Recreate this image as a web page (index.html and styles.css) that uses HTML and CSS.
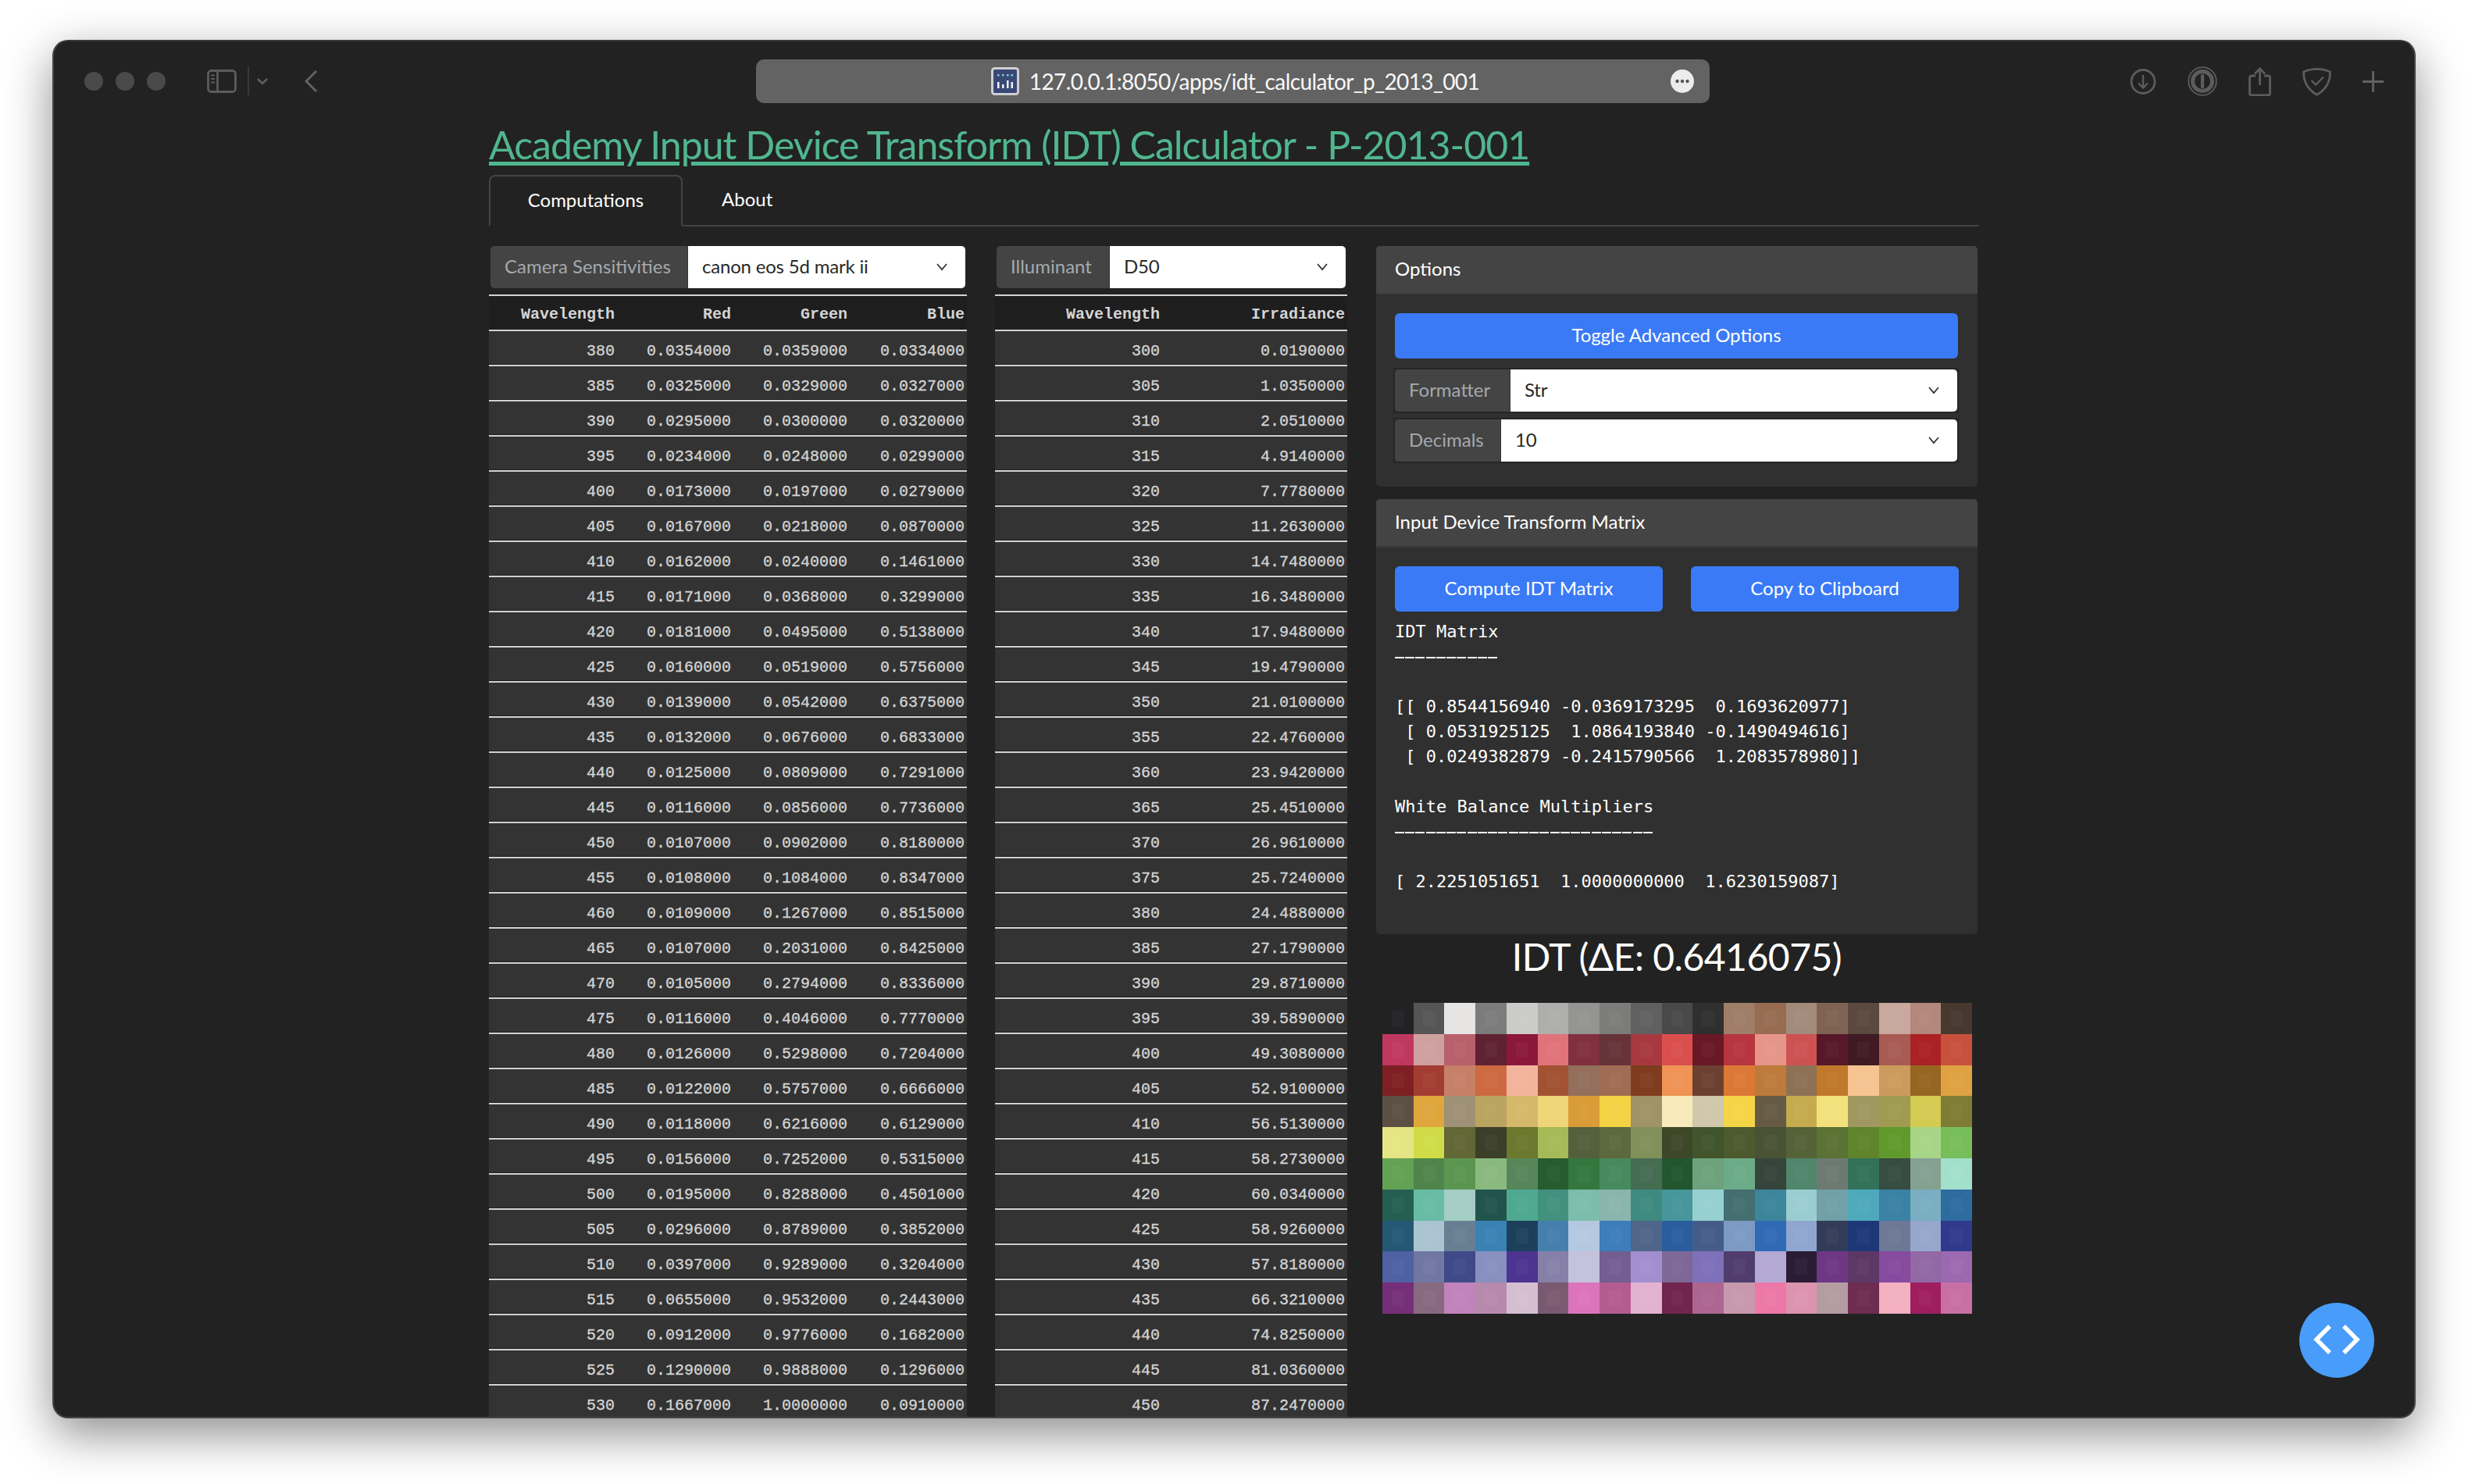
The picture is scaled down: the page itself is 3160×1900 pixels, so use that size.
FILE: index.html
```html
<!DOCTYPE html>
<html lang="en">
<head>
    <meta charset="UTF-8">
    <meta name="viewport" content="width=device-width, initial-scale=1.0">
    <title>Academy Input Device Transform (IDT) Calculator - P-2013-001</title>
    <link rel="stylesheet" href="styles.css">
</head>
<body>

<div class="window">
    <div class="toolbar">
        <div class="lights"><span></span><span></span><span></span></div>
        <svg class="tb-sidebar" width="38" height="30" viewBox="0 0 38 30" fill="none" stroke="#5c5c5c" stroke-width="2.800"><rect x="1.500" y="1.500" width="35" height="27" rx="4"/><path d="M13.500 1v28"/><path d="M5 7.500h5M5 12h5M5 16.500h5" stroke-width="2.200"/></svg>
        <span class="tb-sep"></span>
        <svg class="tb-chevron" width="14" height="8" viewBox="0 0 14 8" fill="none" stroke="#5e5e5e" stroke-width="2.600"><path d="M1 1l6 6 6-6"/></svg>
        <svg class="tb-back" width="16" height="28" viewBox="0 0 16 28" fill="none" stroke="#626262" stroke-width="3"><path d="M15 1L2 14l13 13"/></svg>
        <div class="urlbar">
            <svg class="favicon" width="36" height="36" viewBox="0 0 36 36"><rect x="1.500" y="1.500" width="33" height="33" rx="3" fill="#3a4876" stroke="#cfcfd2" stroke-width="3"/><path d="M8 9h2.500v2.500H8zM14 9h2.500v2.500H14zM20 9h2.500v2.500H20zM25.500 9H28v2.500h-2.500z" fill="#7fd0c8"/><path d="M8 19h2.500v8H8zM14 22h2.500v5H14zM20 17h2.500v10H20zM25.500 19H28v8h-2.500z" fill="#f0f4f8"/></svg>
            <span class="url-text">127.0.0.1:8050/apps/idt_calculator_p_2013_001</span>
            <svg class="url-more" width="30" height="30" viewBox="0 0 30 30"><circle cx="15" cy="15" r="15" fill="#ececec"/><circle cx="8.500" cy="15" r="2.200" fill="#555"/><circle cx="15" cy="15" r="2.200" fill="#555"/><circle cx="21.500" cy="15" r="2.200" fill="#555"/></svg>
        </div>
        <div class="tb-right">
            <svg width="34" height="33" viewBox="0 0 34 33" fill="none" stroke="#5c5c5c" stroke-width="2.800"><circle cx="17" cy="16.500" r="15"/><path d="M17 8v16M11 18.500l6 6 6-6" stroke-width="2.400"/></svg>
            <svg width="38" height="38" viewBox="0 0 38 38" fill="none" stroke="#5c5c5c"><circle cx="19" cy="19" r="17.800" stroke-width="1.800"/><circle cx="19" cy="19" r="12.500" stroke-width="5"/><path d="M19 12v14" stroke-width="4.400" stroke-linecap="round"/></svg>
            <svg width="29" height="37" viewBox="0 0 29 37" fill="none" stroke="#5c5c5c" stroke-width="2.800"><path d="M9 11H4a2.500 2.500 0 0 0-2.500 2.500v20A2.500 2.500 0 0 0 4 36h21a2.500 2.500 0 0 0 2.500-2.500v-20A2.500 2.500 0 0 0 25 11h-5"/><path d="M14.500 23V2M8 8.500l6.500-6.500 6.500 6.500"/></svg>
            <svg width="37" height="37" viewBox="0 0 37 37" fill="none" stroke="#5c5c5c" stroke-width="2.800"><path d="M1.700 6C12 1.200 25 1.200 35.300 6 36 18 30 29 18.500 35.300 7 29 1 18 1.700 6z"/><path d="M11.500 17l5.500 5.500 10-10" stroke-width="2.400"/></svg>
            <svg width="27" height="27" viewBox="0 0 27 27" fill="none" stroke="#626262" stroke-width="2.800"><path d="M13.500 0v27M0 13.500h27"/></svg>
        </div>
    </div>

    <div class="content">
        <h1 class="title"><a href="#">Academy Input Device Transform (IDT) Calculator - P-2013-001</a></h1>
        <div class="tabs">
            <div class="tab tab-active">Computations</div>
            <div class="tab">About</div>
        </div>

        <div class="columns">
            <div class="col-sens">
                <div class="input-group">
                    <span class="group-label label-sens">Camera Sensitivities</span>
                    <div class="group-select">canon eos 5d mark ii<svg width="16" height="10" viewBox="0 0 16 10" fill="none" stroke="#333" stroke-width="1.800"><path d="M2 1l6 7 6-7"/></svg></div>
                </div>
                <table class="data">
                    <thead><tr><th class="w-164">Wavelength</th><th class="w-149">Red</th><th class="w-149">Green</th><th class="w-150">Blue</th></tr></thead>
                    <tbody>
                        <tr><td>380</td><td>0.0354000</td><td>0.0359000</td><td>0.0334000</td></tr>
                        <tr><td>385</td><td>0.0325000</td><td>0.0329000</td><td>0.0327000</td></tr>
                        <tr><td>390</td><td>0.0295000</td><td>0.0300000</td><td>0.0320000</td></tr>
                        <tr><td>395</td><td>0.0234000</td><td>0.0248000</td><td>0.0299000</td></tr>
                        <tr><td>400</td><td>0.0173000</td><td>0.0197000</td><td>0.0279000</td></tr>
                        <tr><td>405</td><td>0.0167000</td><td>0.0218000</td><td>0.0870000</td></tr>
                        <tr><td>410</td><td>0.0162000</td><td>0.0240000</td><td>0.1461000</td></tr>
                        <tr><td>415</td><td>0.0171000</td><td>0.0368000</td><td>0.3299000</td></tr>
                        <tr><td>420</td><td>0.0181000</td><td>0.0495000</td><td>0.5138000</td></tr>
                        <tr><td>425</td><td>0.0160000</td><td>0.0519000</td><td>0.5756000</td></tr>
                        <tr><td>430</td><td>0.0139000</td><td>0.0542000</td><td>0.6375000</td></tr>
                        <tr><td>435</td><td>0.0132000</td><td>0.0676000</td><td>0.6833000</td></tr>
                        <tr><td>440</td><td>0.0125000</td><td>0.0809000</td><td>0.7291000</td></tr>
                        <tr><td>445</td><td>0.0116000</td><td>0.0856000</td><td>0.7736000</td></tr>
                        <tr><td>450</td><td>0.0107000</td><td>0.0902000</td><td>0.8180000</td></tr>
                        <tr><td>455</td><td>0.0108000</td><td>0.1084000</td><td>0.8347000</td></tr>
                        <tr><td>460</td><td>0.0109000</td><td>0.1267000</td><td>0.8515000</td></tr>
                        <tr><td>465</td><td>0.0107000</td><td>0.2031000</td><td>0.8425000</td></tr>
                        <tr><td>470</td><td>0.0105000</td><td>0.2794000</td><td>0.8336000</td></tr>
                        <tr><td>475</td><td>0.0116000</td><td>0.4046000</td><td>0.7770000</td></tr>
                        <tr><td>480</td><td>0.0126000</td><td>0.5298000</td><td>0.7204000</td></tr>
                        <tr><td>485</td><td>0.0122000</td><td>0.5757000</td><td>0.6666000</td></tr>
                        <tr><td>490</td><td>0.0118000</td><td>0.6216000</td><td>0.6129000</td></tr>
                        <tr><td>495</td><td>0.0156000</td><td>0.7252000</td><td>0.5315000</td></tr>
                        <tr><td>500</td><td>0.0195000</td><td>0.8288000</td><td>0.4501000</td></tr>
                        <tr><td>505</td><td>0.0296000</td><td>0.8789000</td><td>0.3852000</td></tr>
                        <tr><td>510</td><td>0.0397000</td><td>0.9289000</td><td>0.3204000</td></tr>
                        <tr><td>515</td><td>0.0655000</td><td>0.9532000</td><td>0.2443000</td></tr>
                        <tr><td>520</td><td>0.0912000</td><td>0.9776000</td><td>0.1682000</td></tr>
                        <tr><td>525</td><td>0.1290000</td><td>0.9888000</td><td>0.1296000</td></tr>
                        <tr><td>530</td><td>0.1667000</td><td>1.0000000</td><td>0.0910000</td></tr>
                    </tbody>
                </table>
            </div>

            <div class="col-illum">
                <div class="input-group">
                    <span class="group-label label-illum">Illuminant</span>
                    <div class="group-select">D50<svg width="16" height="10" viewBox="0 0 16 10" fill="none" stroke="#333" stroke-width="1.800"><path d="M2 1l6 7 6-7"/></svg></div>
                </div>
                <table class="data">
                    <thead><tr><th class="w-214">Wavelength</th><th class="w-237">Irradiance</th></tr></thead>
                    <tbody>
                        <tr><td>300</td><td>0.0190000</td></tr>
                        <tr><td>305</td><td>1.0350000</td></tr>
                        <tr><td>310</td><td>2.0510000</td></tr>
                        <tr><td>315</td><td>4.9140000</td></tr>
                        <tr><td>320</td><td>7.7780000</td></tr>
                        <tr><td>325</td><td>11.2630000</td></tr>
                        <tr><td>330</td><td>14.7480000</td></tr>
                        <tr><td>335</td><td>16.3480000</td></tr>
                        <tr><td>340</td><td>17.9480000</td></tr>
                        <tr><td>345</td><td>19.4790000</td></tr>
                        <tr><td>350</td><td>21.0100000</td></tr>
                        <tr><td>355</td><td>22.4760000</td></tr>
                        <tr><td>360</td><td>23.9420000</td></tr>
                        <tr><td>365</td><td>25.4510000</td></tr>
                        <tr><td>370</td><td>26.9610000</td></tr>
                        <tr><td>375</td><td>25.7240000</td></tr>
                        <tr><td>380</td><td>24.4880000</td></tr>
                        <tr><td>385</td><td>27.1790000</td></tr>
                        <tr><td>390</td><td>29.8710000</td></tr>
                        <tr><td>395</td><td>39.5890000</td></tr>
                        <tr><td>400</td><td>49.3080000</td></tr>
                        <tr><td>405</td><td>52.9100000</td></tr>
                        <tr><td>410</td><td>56.5130000</td></tr>
                        <tr><td>415</td><td>58.2730000</td></tr>
                        <tr><td>420</td><td>60.0340000</td></tr>
                        <tr><td>425</td><td>58.9260000</td></tr>
                        <tr><td>430</td><td>57.8180000</td></tr>
                        <tr><td>435</td><td>66.3210000</td></tr>
                        <tr><td>440</td><td>74.8250000</td></tr>
                        <tr><td>445</td><td>81.0360000</td></tr>
                        <tr><td>450</td><td>87.2470000</td></tr>
                    </tbody>
                </table>
            </div>

            <div class="col-side">
                <div class="card card-options">
                    <div class="card-header">Options</div>
                    <div class="card-body">
                        <button class="btn btn-full">Toggle Advanced Options</button>
                        <div class="input-group group-option">
                            <span class="group-label label-formatter">Formatter</span>
                            <div class="group-select">Str<svg width="16" height="10" viewBox="0 0 16 10" fill="none" stroke="#333" stroke-width="1.800"><path d="M2 1l6 7 6-7"/></svg></div>
                        </div>
                        <div class="input-group group-option">
                            <span class="group-label label-decimals">Decimals</span>
                            <div class="group-select">10<svg width="16" height="10" viewBox="0 0 16 10" fill="none" stroke="#333" stroke-width="1.800"><path d="M2 1l6 7 6-7"/></svg></div>
                        </div>
                    </div>
                </div>

                <div class="card card-matrix">
                    <div class="card-header">Input Device Transform Matrix</div>
                    <div class="card-body">
                        <div class="btn-row">
                            <button class="btn">Compute IDT Matrix</button>
                            <button class="btn">Copy to Clipboard</button>
                        </div>
<pre class="matrix">IDT Matrix
<span class="rule">----------</span>

[[ 0.8544156940 -0.0369173295  0.1693620977]
 [ 0.0531925125  1.0864193840 -0.1490494616]
 [ 0.0249382879 -0.2415790566  1.2083578980]]

White Balance Multipliers
<span class="rule">-------------------------</span>

[ 2.2251051651  1.0000000000  1.6230159087]</pre>
                    </div>
                </div>

                <h3 class="chart-title">IDT (ΔE: 0.6416075)</h3>
                <div class="chart">
                    <i style="background:#222224"></i><i style="background:#555555"></i><i style="background:#e6e5e3"></i><i style="background:#7b7c7b"></i><i style="background:#cbccc9"></i><i style="background:#aeaeac"></i><i style="background:#949493"></i><i style="background:#7c7c7b"></i><i style="background:#5f605f"></i><i style="background:#484948"></i><i style="background:#2e2f2e"></i><i style="background:#9f7d66"></i><i style="background:#976c51"></i><i style="background:#a38b7c"></i><i style="background:#7f6352"></i><i style="background:#5b483e"></i><i style="background:#c9a89d"></i><i style="background:#b3877c"></i><i style="background:#473830"></i>
                    <i style="background:#c03860"></i><i style="background:#cfa0a0"></i><i style="background:#b8606c"></i><i style="background:#5e2233"></i><i style="background:#8b173c"></i><i style="background:#e0737a"></i><i style="background:#80303f"></i><i style="background:#663339"></i><i style="background:#a8383f"></i><i style="background:#da4f4e"></i><i style="background:#691826"></i><i style="background:#b6353f"></i><i style="background:#e69589"></i><i style="background:#cc5352"></i><i style="background:#571829"></i><i style="background:#3f1a24"></i><i style="background:#a85b53"></i><i style="background:#aa2224"></i><i style="background:#c8513d"></i>
                    <i style="background:#7e2023"></i><i style="background:#a33d33"></i><i style="background:#c77f68"></i><i style="background:#cd6a42"></i><i style="background:#f2b49c"></i><i style="background:#a25232"></i><i style="background:#936f5c"></i><i style="background:#a06c53"></i><i style="background:#7f3c1e"></i><i style="background:#f09355"></i><i style="background:#6c4030"></i><i style="background:#dc7836"></i><i style="background:#bd7b3b"></i><i style="background:#8d7155"></i><i style="background:#c0782a"></i><i style="background:#f5c490"></i><i style="background:#cc9a5c"></i><i style="background:#956521"></i><i style="background:#dea242"></i>
                    <i style="background:#5c5045"></i><i style="background:#dfa63c"></i><i style="background:#9f9175"></i><i style="background:#bba460"></i><i style="background:#d5b86a"></i><i style="background:#eed577"></i><i style="background:#d99c36"></i><i style="background:#f3d244"></i><i style="background:#a09367"></i><i style="background:#f8eabb"></i><i style="background:#d0c7ac"></i><i style="background:#f5d548"></i><i style="background:#665a45"></i><i style="background:#c4ac4e"></i><i style="background:#f3e27c"></i><i style="background:#9f9860"></i><i style="background:#a09b50"></i><i style="background:#d3cb52"></i><i style="background:#7f7c36"></i>
                    <i style="background:#e5e683"></i><i style="background:#cfdc47"></i><i style="background:#636635"></i><i style="background:#3b3e28"></i><i style="background:#6b782d"></i><i style="background:#a6ba57"></i><i style="background:#545f3c"></i><i style="background:#5c693c"></i><i style="background:#82915a"></i><i style="background:#3e4829"></i><i style="background:#41552c"></i><i style="background:#4c5a2e"></i><i style="background:#495234"></i><i style="background:#546238"></i><i style="background:#5a7234"></i><i style="background:#5f842c"></i><i style="background:#609a2c"></i><i style="background:#a6d588"></i><i style="background:#77bd5a"></i>
                    <i style="background:#63a255"></i><i style="background:#4f854b"></i><i style="background:#5b9650"></i><i style="background:#8ab97f"></i><i style="background:#57865a"></i><i style="background:#265c30"></i><i style="background:#34783f"></i><i style="background:#478a5e"></i><i style="background:#456d52"></i><i style="background:#22562f"></i><i style="background:#6da27c"></i><i style="background:#6cab88"></i><i style="background:#36443c"></i><i style="background:#4f866c"></i><i style="background:#6d7a72"></i><i style="background:#33725a"></i><i style="background:#374c42"></i><i style="background:#85a192"></i><i style="background:#a3e0cb"></i>
                    <i style="background:#265e52"></i><i style="background:#68bca4"></i><i style="background:#a4cdc5"></i><i style="background:#22544e"></i><i style="background:#4fa990"></i><i style="background:#42917f"></i><i style="background:#7cbdab"></i><i style="background:#8ab5ae"></i><i style="background:#3e8a80"></i><i style="background:#46969b"></i><i style="background:#96d0d0"></i><i style="background:#456e70"></i><i style="background:#3c859a"></i><i style="background:#9acdd2"></i><i style="background:#71a0a8"></i><i style="background:#4ea9bc"></i><i style="background:#3a82a6"></i><i style="background:#7aaec2"></i><i style="background:#2e6b9e"></i>
                    <i style="background:#245873"></i><i style="background:#abc4d2"></i><i style="background:#687f93"></i><i style="background:#3a82b4"></i><i style="background:#1c405c"></i><i style="background:#447fae"></i><i style="background:#b4c9e0"></i><i style="background:#3c7dba"></i><i style="background:#50658a"></i><i style="background:#2a5d9e"></i><i style="background:#465c88"></i><i style="background:#7c9ac4"></i><i style="background:#316ab4"></i><i style="background:#8fa7d0"></i><i style="background:#323c58"></i><i style="background:#1e3877"></i><i style="background:#6c7896"></i><i style="background:#96a6cc"></i><i style="background:#2f3a8c"></i>
                    <i style="background:#4f60a3"></i><i style="background:#7077a2"></i><i style="background:#414a88"></i><i style="background:#8890c0"></i><i style="background:#4c3490"></i><i style="background:#8680a8"></i><i style="background:#c4c2dc"></i><i style="background:#735e92"></i><i style="background:#a38fd0"></i><i style="background:#7d6896"></i><i style="background:#7e70ba"></i><i style="background:#503d6e"></i><i style="background:#b4a8d4"></i><i style="background:#2a1c34"></i><i style="background:#6f3686"></i><i style="background:#5c3866"></i><i style="background:#864a9e"></i><i style="background:#9269a4"></i><i style="background:#9b69b0"></i>
                    <i style="background:#742f78"></i><i style="background:#886a80"></i><i style="background:#c183bc"></i><i style="background:#b68aac"></i><i style="background:#d4bfd0"></i><i style="background:#7a5a70"></i><i style="background:#dc74bc"></i><i style="background:#b45c90"></i><i style="background:#e2b2d0"></i><i style="background:#70244e"></i><i style="background:#ac6690"></i><i style="background:#c898ae"></i><i style="background:#ec78a8"></i><i style="background:#dc94ae"></i><i style="background:#b39ca2"></i><i style="background:#6e2c50"></i><i style="background:#f2b0c0"></i><i style="background:#9e1e60"></i><i style="background:#c870a4"></i>
                </div>
            </div>
        </div>
    </div>

    <div class="fab">
        <svg width="96" height="96" viewBox="0 0 96 96" fill="none" stroke="#fff" stroke-width="5.500"><path d="M39 30L22 47l17 17M57 30l17 17-17 17"/></svg>
    </div>
</div>

</body>
</html>
```

FILE: styles.css
```css
html, body {
    height: 100%;
    overflow: hidden;
}
body {
    margin: 0;
    background-color: #ffffff;
    font-family: Lato, "Liberation Sans", sans-serif;
}
.window {
    position: absolute;
    left: 67px;
    top: 51px;
    width: 3026px;
    height: 1765px;
    box-sizing: border-box;
    border: 2px solid #464646;
    border-top-color: #3a3a3a;
    border-radius: 20px;
    background-color: #222222;
    box-shadow: 0 20px 60px rgba(0, 0, 0, 0.45);
    overflow: hidden;
}

/* browser toolbar */
.toolbar {
    display: flex;
    align-items: center;
    height: 102px;
    padding-left: 39px;
}
.lights {
    display: flex;
    gap: 16px;
}
.lights span {
    width: 24px;
    height: 24px;
    border-radius: 50%;
    background-color: #4a4a4a;
}
.tb-sidebar {
    margin-left: 53px;
}
.tb-sep {
    width: 2px;
    height: 36px;
    margin-left: 14px;
    background-color: #3a3a3a;
}
.tb-chevron {
    margin-left: 10px;
}
.tb-back {
    margin-left: 47px;
}
.urlbar {
    position: relative;
    display: flex;
    align-items: center;
    justify-content: center;
    gap: 13px;
    width: 1221px;
    height: 56px;
    margin-left: 562px;
    border-radius: 10px;
    background-color: #636363;
    color: #f8f8f8;
    font-size: 28px;
    letter-spacing: -0.6px;
}
.favicon {
    margin-left: 6px;
}
.url-more {
    position: absolute;
    right: 20px;
    top: 13px;
}
.tb-right {
    display: flex;
    align-items: center;
    gap: 40px;
    margin-left: 538px;
}

/* page */
.content {
    width: 1908px;
    margin-left: 557px;
}
.title {
    margin: 0 0 9px;
    font-size: 50px;
    font-weight: 400;
    letter-spacing: -1px;
    line-height: 60px;
    white-space: nowrap;
}
.title a {
    color: #50b68f;
}
.tabs {
    display: flex;
    height: 64px;
    border-bottom: 2px solid #444444;
}
.tab {
    display: flex;
    align-items: center;
    box-sizing: border-box;
    padding: 0 50px 4px;
    color: #ffffff;
    font-size: 24px;
}
.tab-active {
    width: 248px;
    height: 66px;
    justify-content: center;
    padding: 0 0 4px;
    border: 2px solid #444444;
    border-bottom-color: #222222;
    border-radius: 8px 8px 0 0;
    background-color: #222222;
}
.columns {
    display: flex;
    margin-top: 25px;
}
.col-sens {
    width: 612px;
    flex: none;
}
.col-illum {
    width: 451px;
    margin-left: 36px;
    flex: none;
}
.col-side {
    width: 770px;
    margin-left: 37px;
    flex: none;
}

/* select groups */
.input-group {
    display: flex;
    height: 54px;
    margin: 0 2px 8px;
    font-size: 24px;
}
.group-label {
    display: flex;
    align-items: center;
    box-sizing: border-box;
    padding: 0 0 4px 18px;
    border-radius: 5px 0 0 5px;
    background-color: #444444;
    color: #a4a9ae;
    flex: none;
}
.label-sens {
    width: 252px;
}
.label-illum {
    width: 144px;
}
.label-formatter {
    width: 147px;
}
.label-decimals {
    width: 135px;
}
.group-select {
    display: flex;
    align-items: center;
    justify-content: space-between;
    flex: 1;
    padding: 0 22px 4px 18px;
    border-left: 1px solid #333333;
    border-radius: 0 5px 5px 0;
    background-color: #ffffff;
    color: #282828;
    letter-spacing: -0.2px;
}
.group-select svg {
    margin-top: 4px;
}
.group-option {
    margin: 0 0 10px;
    width: 720px;
    outline: 2px solid #262626;
}

/* tables */
.data {
    border-collapse: separate;
    border-spacing: 0;
    table-layout: fixed;
    width: 100%;
    font-family: "Liberation Mono", monospace;
    font-size: 20px;
    color: #d4d4d4;
}
.data th {
    height: 47px;
    padding: 3px 3px 0 0;
    box-sizing: border-box;
    border-top: 2px solid #d2d2d2;
    border-bottom: 2px solid #d2d2d2;
    background-color: #1e1e1e;
    font-weight: 700;
    text-align: right;
}
.data td {
    height: 45px;
    padding: 7px 3px 0 0;
    box-sizing: border-box;
    border-bottom: 2px solid #d2d2d2;
    background-color: #333333;
    box-shadow: inset 0 -1px 0 #1f1f1f;
    text-align: right;
    -webkit-text-stroke: 0.3px #d4d4d4;
}
.w-164 {
    width: 164px;
}
.w-149 {
    width: 149px;
}
.w-150 {
    width: 150px;
}
.w-214 {
    width: 214px;
}
.w-237 {
    width: 237px;
}

/* side cards */
.card {
    background-color: #303030;
    border-radius: 5px;
}
.card-options {
    margin-bottom: 16px;
}
.card-header {
    box-sizing: border-box;
    display: flex;
    align-items: center;
    height: 62px;
    padding: 0 0 4px 24px;
    border-bottom: 2px solid #3a3a3a;
    border-radius: 5px 5px 0 0;
    background-color: #444444;
    color: #ffffff;
    font-size: 24px;
}
.card-body {
    padding: 24px 24px 22px;
}
.card-matrix .card-body {
    padding-bottom: 51px;
}
.btn {
    height: 58px;
    padding: 0 0 4px;
    border: none;
    border-radius: 6px;
    background-color: #3a7af6;
    color: #ffffff;
    font-family: Lato, "Liberation Sans", sans-serif;
    font-size: 24px;
}
.btn-full {
    display: block;
    width: 721px;
    margin-bottom: 14px;
}
.btn-row {
    display: flex;
    justify-content: space-between;
    width: 722px;
}
.btn-row .btn {
    width: 343px;
}
.matrix {
    margin: 10px 0 0;
    color: #ffffff;
    font-family: "DejaVu Sans Mono", monospace;
    font-size: 22px;
    line-height: 32px;
}
.rule {
    background: repeating-linear-gradient(90deg, #ffffff 0 12px, transparent 12px 13.24px) 0 55% / 100% 2px no-repeat;
}
.chart-title {
    margin: 0 0 30px;
    color: #ffffff;
    font-size: 48px;
    font-weight: 400;
    letter-spacing: -0.5px;
    line-height: 58px;
    text-align: center;
}
.chart {
    display: grid;
    grid-template-columns: repeat(19, 1fr);
    grid-template-rows: repeat(10, 1fr);
    width: 755px;
    height: 398px;
    margin-left: 8px;
    filter: blur(0.7px);
}
.chart i {
    position: relative;
}
.chart i::after {
    content: "";
    position: absolute;
    inset: 25% 30%;
    background-color: rgba(255, 255, 255, 0.03);
}
.fab {
    position: absolute;
    left: 2875px;
    top: 1615px;
    width: 96px;
    height: 96px;
    border-radius: 50%;
    background-color: #489cfa;
}
```
